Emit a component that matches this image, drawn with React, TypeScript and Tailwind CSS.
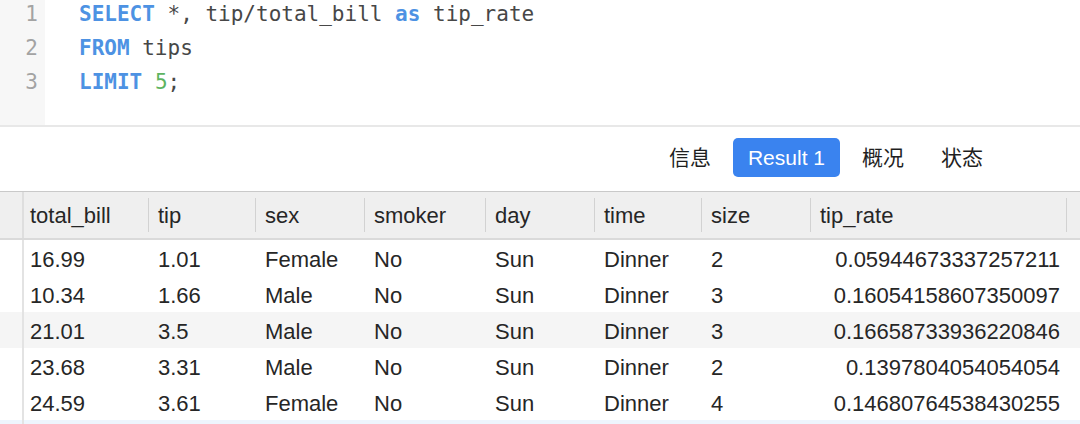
const columns = [
  { key: "total_bill", label: "total_bill", width: "w-[128px]" },
  { key: "tip", label: "tip", width: "w-[107px]" },
  { key: "sex", label: "sex", width: "w-[109px]" },
  { key: "smoker", label: "smoker", width: "w-[121px]" },
  { key: "day", label: "day", width: "w-[109px]" },
  { key: "time", label: "time", width: "w-[107px]" },
  { key: "size", label: "size", width: "w-[109px]" },
];

const rows = [
  ["16.99", "1.01", "Female", "No", "Sun", "Dinner", "2", "0.05944673337257211"],
  ["10.34", "1.66", "Male", "No", "Sun", "Dinner", "3", "0.16054158607350097"],
  ["21.01", "3.5", "Male", "No", "Sun", "Dinner", "3", "0.16658733936220846"],
  ["23.68", "3.31", "Male", "No", "Sun", "Dinner", "2", "0.1397804054054054"],
  ["24.59", "3.61", "Female", "No", "Sun", "Dinner", "4", "0.14680764538430255"],
];

const kw = "font-bold text-[#4d92e3]";

function Editor() {
  return (
    <div className="flex h-[125px] font-['DejaVu_Sans_Mono',monospace] text-[21px] leading-[34px]">
      <div className="w-[45px] shrink-0 bg-[#f7f7f7] pr-[7px] text-right text-[#a3a3a3]">
        <div className="-mt-[3px]">
          <div>1</div>
          <div>2</div>
          <div>3</div>
        </div>
      </div>
      <div className="pl-[34px] text-[#474747]">
        <div className="-mt-[3px] whitespace-pre">
          <div>
            <span className={kw}>SELECT</span> *, tip/total_bill <span className={kw}>as</span> tip_rate
          </div>
          <div>
            <span className={kw}>FROM</span> tips
          </div>
          <div>
            <span className={kw}>LIMIT</span> <span className="text-[#5db461]">5</span>;
          </div>
        </div>
      </div>
    </div>
  );
}

function Tabs() {
  const tabs = ["信息", "Result 1", "概况", "状态"];
  return (
    <div className="flex h-[66px] items-center justify-end gap-[7px] border-t-2 border-[#e8e8e8] pb-[3px] pr-[82px] font-['Liberation_Sans','Noto_Sans_CJK_SC',sans-serif] text-[21px]">
      {tabs.map((t) =>
        t === "Result 1" ? (
          <div
            key={t}
            className="flex h-[39px] items-center rounded-[5px] bg-[#3a83ef] px-[15px] text-white"
          >
            {t}
          </div>
        ) : (
          <div key={t} className="px-[15px] text-[#1f1f1f]">
            {t}
          </div>
        ),
      )}
    </div>
  );
}

function ResultTable() {
  return (
    <div className="font-['Liberation_Sans',sans-serif] text-[22px] text-[#262626]">
      <div className="flex h-[49px] border-t border-b-2 border-t-[#c9c9c9] border-b-[#dadada] bg-[#efefef]">
        <div className="w-[24px] shrink-0 border-r-2 border-[#dedede]" />
        {columns.map((c, i) => (
          <div key={c.key} className={`relative flex items-center pl-[6px] ${c.width}`}>
            {i > 0 && <span className="absolute left-[-4px] top-[6px] h-[34px] w-px bg-[#d2d2d2]" />}
            {c.label}
          </div>
        ))}
        <div className="relative flex w-[253px] items-center pl-[6px]">
          <span className="absolute left-[-4px] top-[6px] h-[34px] w-px bg-[#d2d2d2]" />
          tip_rate
          <span className="absolute right-0 top-[6px] h-[34px] w-px bg-[#d2d2d2]" />
        </div>
      </div>
      {rows.map((r, ri) => (
        <div key={ri} className={`flex h-[36px] ${ri === 2 ? "bg-[#f5f5f5]" : "bg-white"}`}>
          <div className="w-[24px] shrink-0 border-r-2 border-[#e3e3e3]" />
          {columns.map((c, ci) => (
            <div key={c.key} className={`flex items-center pl-[6px] pt-[2px] ${c.width}`}>
              {r[ci]}
            </div>
          ))}
          <div className="flex w-[253px] items-center justify-end pr-[7px] pt-[2px]">{r[7]}</div>
        </div>
      ))}
      <div className="flex h-[10px] bg-[#eef5fd]">
        <div className="w-[24px] shrink-0 border-r-2 border-[#e3e3e3]" />
      </div>
    </div>
  );
}

export default function App() {
  return (
    <div className="h-[424px] w-[1080px] overflow-hidden bg-white">
      <Editor />
      <Tabs />
      <ResultTable />
    </div>
  );
}
